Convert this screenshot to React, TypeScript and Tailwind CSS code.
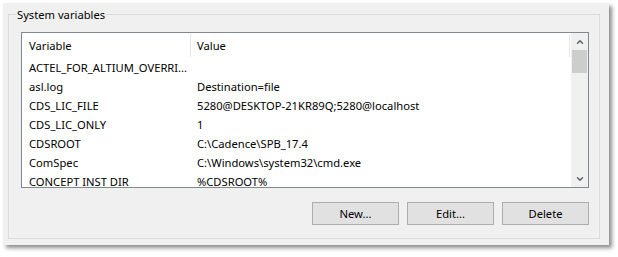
import { ChevronUp, ChevronDown } from 'lucide-react'

const rows = [
  { name: 'ACTEL_FOR_ALTIUM_OVERRI...', value: '' },
  { name: 'asl.log', value: 'Destination=file' },
  { name: 'CDS_LIC_FILE', value: '5280@DESKTOP-21KR89Q;5280@localhost' },
  { name: 'CDS_LIC_ONLY', value: '1' },
  { name: 'CDSROOT', value: 'C:\\Cadence\\SPB_17.4' },
  { name: 'ComSpec', value: 'C:\\Windows\\system32\\cmd.exe' },
  { name: 'CONCEPT INST DIR', value: '%CDSROOT%' },
]

export default function App() {
  return (
    <div className="w-[618px] h-[257px] bg-white pl-[3px] pt-[3px] font-['Noto_Sans',sans-serif] text-[11.2px] text-black">
      {/* Dialog panel */}
      <div className="w-[606px] h-[242px] bg-[#f0f0f0] shadow-[3px_3px_4px_rgba(0,0,0,0.45)] pl-[5px] pt-[3px]">
        <fieldset className="w-[592px] h-[233px] border border-[#dcdcdc] pl-[12px] pr-[10px] pt-[9px] pb-[13px] flex flex-col">
          <legend className="-ml-[4px] px-0 leading-[16px] pt-[1px]">System variables</legend>

          {/* List view */}
          <div className="h-[156px] border border-[#828790] bg-white flex overflow-hidden">
            <div className="flex-1 flex flex-col">
              <div className="h-[25px] flex items-stretch shrink-0">
                <div className="w-[168px] pl-[7px] pt-[2px] flex items-center">Variable</div>
                <div className="my-[1px] w-px bg-[#e5e5e5]" />
                <div className="flex-1 pl-[6px] pt-[2px] flex items-center">Value</div>
                <div className="my-[1px] w-px bg-[#e5e5e5]" />
                <div className="w-[1px]" />
              </div>
              {rows.map((r) => (
                <div key={r.name} className="h-[19px] pt-[2px] flex items-center shrink-0">
                  <div className="w-[169px] pl-[7px] whitespace-nowrap">{r.name}</div>
                  <div className="pl-[6px] whitespace-nowrap">{r.value}</div>
                </div>
              ))}
            </div>

            {/* Scrollbar */}
            <div className="w-[17px] bg-[#f0f0f0] flex flex-col">
              <div className="h-[17px] flex items-center justify-center text-[#606060]">
                <ChevronUp className="w-[10px] h-[10px]" strokeWidth={3.5} />
              </div>
              <div className="mx-[1px] h-[23px] bg-[#cdcdcd]" />
              <div className="flex-1" />
              <div className="h-[17px] flex items-center justify-center text-[#606060]">
                <ChevronDown className="w-[10px] h-[10px]" strokeWidth={3.5} />
              </div>
            </div>
          </div>

          {/* Buttons */}
          <div className="mt-[14px] flex justify-end gap-[8px]">
            {['New...', 'Edit...', 'Delete'].map((b) => (
              <button
                key={b}
                className="w-[87px] h-[23px] pt-[1px] bg-[#e1e1e1] border border-[#adadad] flex items-center justify-center"
              >
                {b}
              </button>
            ))}
          </div>
        </fieldset>
      </div>
    </div>
  )
}
